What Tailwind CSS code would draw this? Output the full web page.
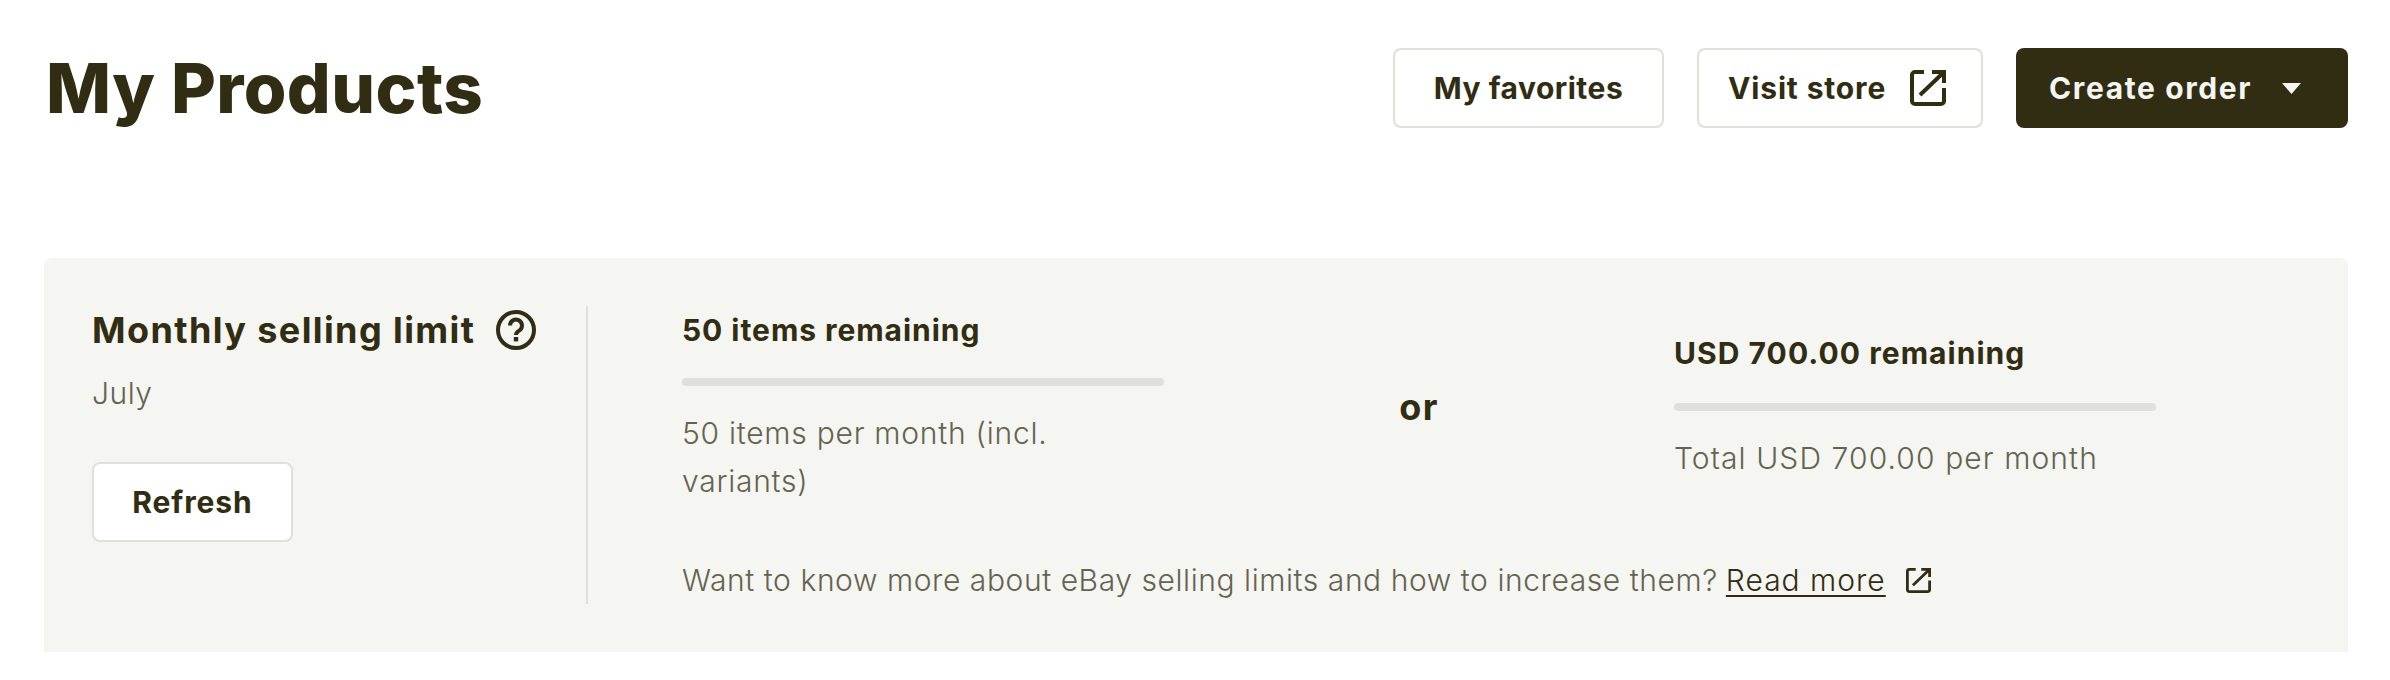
<!DOCTYPE html>
<html lang="en">

<head>
  <meta charset="UTF-8">
  <meta name="viewport" content="width=device-width, initial-scale=1">
  <title>My Products</title>
  <script src="https://cdn.jsdelivr.net/npm/@tailwindcss/browser@4"></script>
</head>

<body class="bg-white font-['Inter',sans-serif] text-[#302d12]">

  <div class="pl-[44px] pr-[42px] pt-[48px]">

    <header class="flex items-center justify-between h-[80px]">
      <h1 class="text-[69px] font-extrabold leading-[80px] pl-[2px] tracking-[0.4px]">My Products</h1>
      <div class="flex gap-[33px]">
        <button class="h-[80px] w-[271px] bg-white border-2 border-[#e0e0da] rounded-[8px] text-[30px] font-bold tracking-[0.5px]">My favorites</button>
        <button class="h-[80px] w-[286px] bg-white border-2 border-[#e0e0da] rounded-[8px] text-[30px] font-bold tracking-[0.85px] flex items-center pl-[29px] gap-[24px]">
          Visit store
          <svg class="w-[36px] h-[36px]" viewBox="0 0 36 36" fill="none" stroke="#302d12" stroke-width="4">
            <path d="M14 2H5a3 3 0 0 0-3 3V31a3 3 0 0 0 3 3H31a3 3 0 0 0 3-3V18" />
            <path d="M10 25L33 3M22 2H34V13" />
          </svg>
        </button>
        <button class="h-[80px] w-[332px] bg-[#302d12] rounded-[8px] text-[#f5f5f1] text-[30px] font-bold tracking-[1.6px] flex items-center pl-[33px]">
          Create order
          <svg class="w-[19px] h-[11px] ml-[30px]" viewBox="0 0 19 11" fill="#f5f5f1">
            <path d="M0 0H19L9.5 11Z" />
          </svg>
        </button>
      </div>
    </header>

    <section class="mt-[130px] h-[394px] bg-[#f5f5f1] rounded-t-[8px] flex pt-[48px] pb-[48px]">

      <div class="w-[544px] pl-[48px] border-r-2 border-[#e0e0da]">
        <div class="flex items-center gap-[21px] h-[48px]">
          <h2 class="text-[36px] font-bold leading-[48px] tracking-[1.4px]">Monthly selling limit</h2>
          <svg class="w-[40px] h-[40px]" viewBox="0 0 40 40" fill="none" stroke="#302d12" stroke-width="4">
            <circle cx="20" cy="20" r="18" />
            <path d="M14 15.500a6 6 0 1 1 10 4.500c-2 1.500-4 2-4 5" />
            <rect x="17.800" y="27" width="4.400" height="4.400" fill="#302d12" stroke="none" />
          </svg>
        </div>
        <p class="mt-[15px] text-[30px] font-light leading-[48px] text-[#636350] tracking-[0.5px]">July</p>
        <button class="mt-[45px] h-[80px] w-[201px] bg-white border-2 border-[#e0e0da] rounded-[8px] text-[30px] font-bold tracking-[0.9px]">Refresh</button>
      </div>

      <div class="w-[1474px] ml-[94px] flex flex-col justify-between">
        <div class="flex items-center justify-between">
          <div class="w-[482px]">
            <p class="text-[30px] font-bold leading-[48px] tracking-[0.95px]">50 items remaining</p>
            <div class="mt-[24px] h-[8px] rounded-[4px] bg-[#e0e0da]"></div>
            <p class="mt-[23px] w-[400px] text-[30px] font-light leading-[48px] text-[#636350] tracking-[0.75px]">50 items per month (incl. variants)</p>
          </div>
          <span class="text-[36px] font-bold leading-[48px] mt-[3px] tracking-[1.5px]">or</span>
          <div class="w-[482px]">
            <p class="text-[30px] font-bold leading-[48px] tracking-[1.05px]">USD 700.00 remaining</p>
            <div class="mt-[26px] h-[8px] rounded-[4px] bg-[#e0e0da]"></div>
            <p class="mt-[23px] text-[30px] font-light leading-[48px] text-[#636350] tracking-[1.1px]">Total USD 700.00 per month</p>
          </div>
        </div>
        <p class="flex items-baseline text-[30px] font-light leading-[48px] text-[#636350] tracking-[0.57px]">
          Want to know more about eBay selling limits and how to increase them?
          <a href="#" class="ml-[8px] text-[#302d12] tracking-[1px] underline decoration-2 underline-offset-[4px]">Read more</a>
          <svg class="ml-[20px] w-[25px] h-[25px] self-center" viewBox="0 0 36 36" fill="none" stroke="#302d12" stroke-width="4">
            <path d="M14 2H5a3 3 0 0 0-3 3V31a3 3 0 0 0 3 3H31a3 3 0 0 0 3-3V18" />
            <path d="M10 25L33 3M22 2H34V13" />
          </svg>
        </p>
      </div>

    </section>
  </div>

</body>

</html>
